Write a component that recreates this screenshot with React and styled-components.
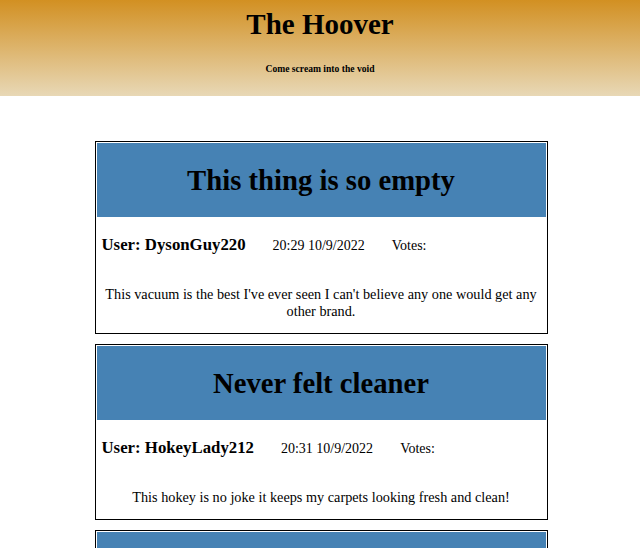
import React from "react";
import styled, { createGlobalStyle } from "styled-components";

const GlobalStyle = createGlobalStyle`
  body {
    margin: 0;
    font-family: "Liberation Serif", "Times New Roman", serif;
    background: #fff;
    color: #000;
  }
`;

const Header = styled.header`
  height: 96px;
  padding-top: 7px;
  box-sizing: border-box;
  text-align: center;
  background: linear-gradient(to bottom, #d29022, #e8d8b6);
`;

const Title = styled.h1`
  margin: 0;
  font-size: 29px;
  line-height: 35px;
  font-weight: bold;
`;

const Tagline = styled.h6`
  margin: 21px 0 0;
  font-size: 9.6px;
  line-height: 12px;
  font-weight: bold;
`;

const Feed = styled.main`
  display: flex;
  flex-direction: column;
  align-items: center;
  gap: 10px;
  padding: 45px 0 0 2px;
`;

const Card = styled.article`
  width: 449px;
  padding: 1px;
  border: 1px solid #000;
`;

const CardTitle = styled.h2`
  margin: 0;
  height: 74px;
  display: flex;
  align-items: center;
  justify-content: center;
  background: #4682b4;
  font-size: 28.7px;
  font-weight: bold;
`;

const Meta = styled.div`
  display: flex;
  align-items: baseline;
  gap: 27px;
  padding: 18px 5px 0;
`;

const User = styled.span`
  font-size: 16.8px;
  font-weight: bold;
`;

const Small = styled.span`
  font-size: 14px;
`;

const Body = styled.p`
  margin: 0;
  padding: 31px 4px 12px;
  font-size: 14.25px;
  line-height: 17px;
  text-align: center;
`;

const posts = [
  {
    title: "This thing is so empty",
    user: "DysonGuy220",
    time: "20:29 10/9/2022",
    body: "This vacuum is the best I've ever seen I can't believe any one would get any other brand.",
  },
  {
    title: "Never felt cleaner",
    user: "HokeyLady212",
    time: "20:31 10/9/2022",
    body: "This hokey is no joke it keeps my carpets looking fresh and clean!",
  },
  {
    title: "Sucks to be you",
    user: "VacuumFan",
    time: "20:35 10/9/2022",
    body: "Nothing else compares.",
  },
];

export default function App() {
  return (
    <>
      <GlobalStyle />
      <Header>
        <Title>The Hoover</Title>
        <Tagline>Come scream into the void</Tagline>
      </Header>
      <Feed>
        {posts.map((post) => (
          <Card key={post.title}>
            <CardTitle>{post.title}</CardTitle>
            <Meta>
              <User>User: {post.user}</User>
              <Small>{post.time}</Small>
              <Small>Votes:</Small>
            </Meta>
            <Body>{post.body}</Body>
          </Card>
        ))}
      </Feed>
    </>
  );
}
